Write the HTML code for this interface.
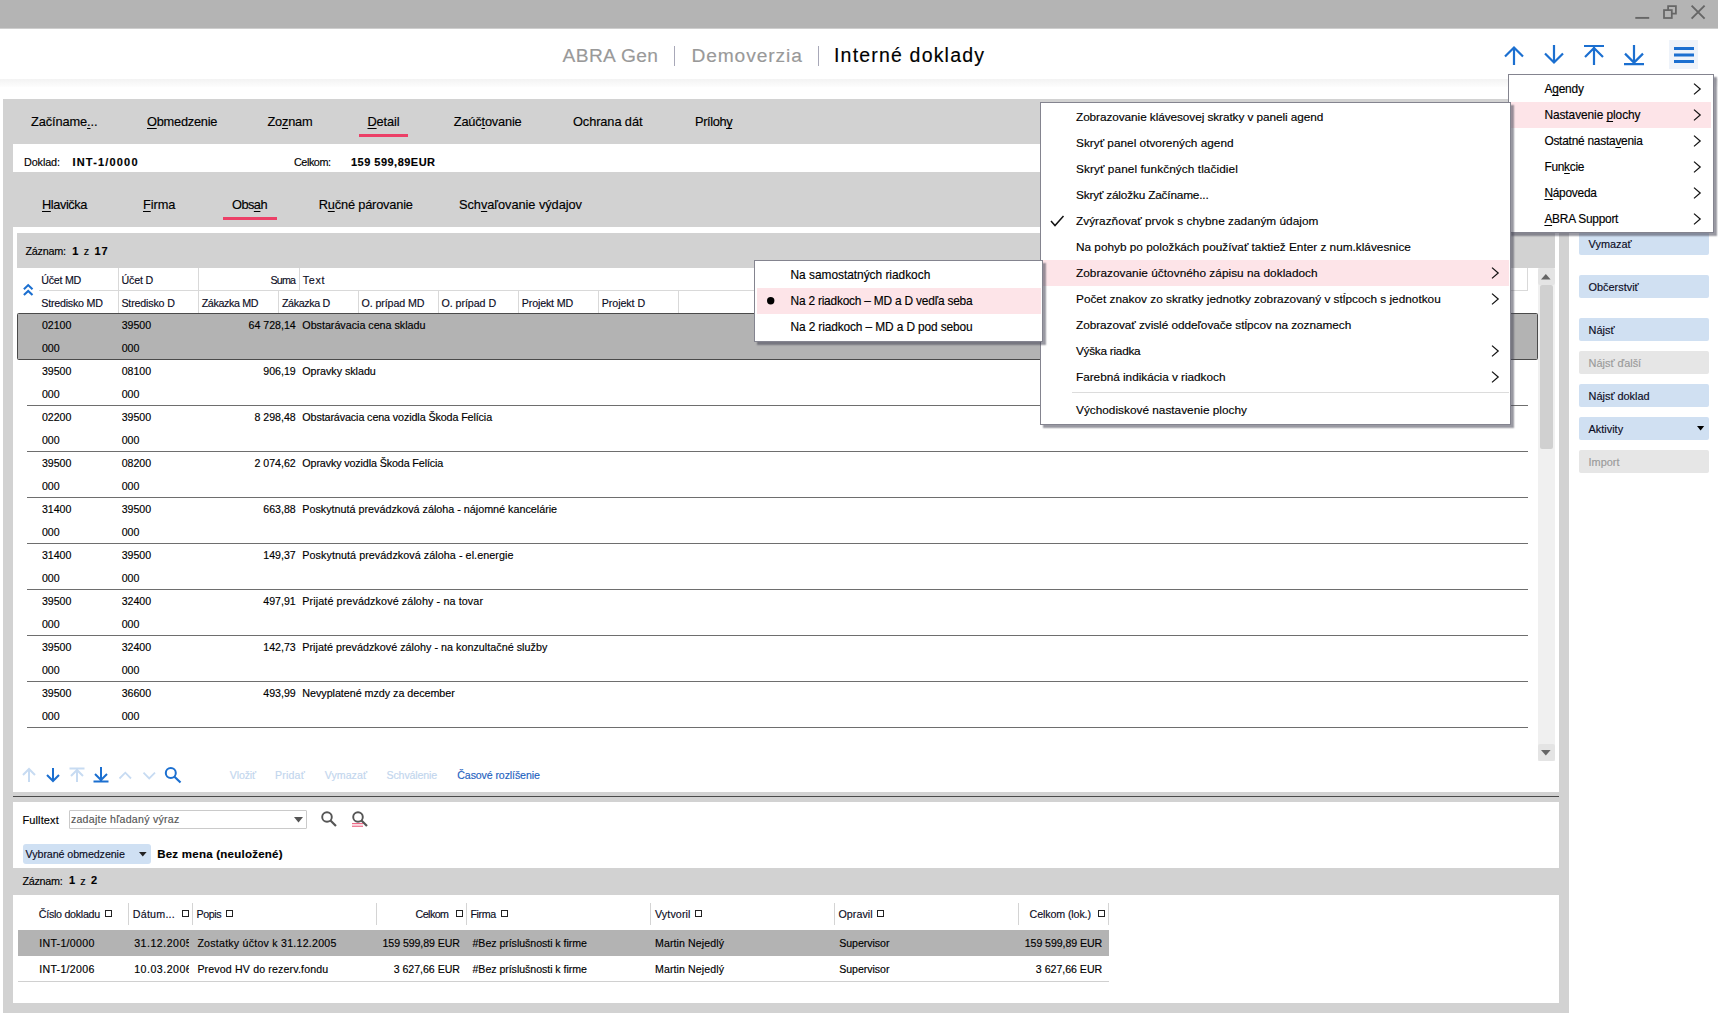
<!DOCTYPE html><html><head><meta charset="utf-8"><style>
html,body{margin:0;padding:0;}
body{width:1718px;height:1014px;overflow:hidden;position:relative;background:#fff;font-family:"Liberation Sans",sans-serif;}
.t{position:absolute;line-height:1;white-space:nowrap;-webkit-text-stroke:0.15px currentColor;}
.r{position:absolute;}
u{text-decoration:underline;text-underline-offset:1.5px;text-decoration-thickness:1px;text-decoration-skip-ink:none;}
</style></head><body>
<div class="r" style="left:0px;top:0px;width:1718px;height:28px;background:#b4b4b4;"></div>
<div class="r" style="left:0px;top:28px;width:1718px;height:1px;background:#cecece;"></div>
<svg class="r" style="left:1620px;top:0" width="98" height="28" viewBox="1620 0 98 28"><path d="M1635.3 17.9H1649.2" stroke="#666" stroke-width="1.9"/><rect x="1664" y="10.1" width="7.8" height="7.9" fill="none" stroke="#666" stroke-width="1.75"/><path d="M1668.1 10.1V6H1675.9V13.6H1671.8" fill="none" stroke="#666" stroke-width="1.75"/><path d="M1691.6 5.6L1704.6 18.6M1704.6 5.6L1691.6 18.6" stroke="#666" stroke-width="1.9"/></svg>
<div class="t" style="top:46.15px;font-size:19.2px;color:#999;letter-spacing:0.353px;left:562.60px;">ABRA Gen</div>
<div class="r" style="left:674px;top:46px;width:1px;height:20px;background:#a8a8b8;"></div>
<div class="t" style="top:46.15px;font-size:19.2px;color:#999;letter-spacing:0.897px;left:691.40px;">Demoverzia</div>
<div class="r" style="left:818px;top:46px;width:1px;height:20px;background:#a8a8b8;"></div>
<div class="t" style="top:45.89px;font-size:19.5px;color:#000;letter-spacing:1.187px;left:834.00px;">Interné doklady</div>
<div class="r" style="left:0px;top:79px;width:1718px;height:8px;background:linear-gradient(#f3f3f3,#fdfdfd);"></div>
<svg class="r" style="left:1490px;top:30px;" width="180" height="45" viewBox="0 0 180 45"><path d="M24 17.5V35 M15 26.5 L24 17.5 L33 26.5" fill="none" stroke="#1b6fd0" stroke-width="2.2"/><path d="M64 15V32.5 M55 23.5 L64 32.5 L73 23.5" fill="none" stroke="#1b6fd0" stroke-width="2.2"/><path d="M94 16H114 M104 17V35 M95 27 L104 18 L113 27" fill="none" stroke="#1b6fd0" stroke-width="2.2"/><path d="M134 34.2H154 M144 15V33 M135 23.6 L144 32.6 L153 23.6" fill="none" stroke="#1b6fd0" stroke-width="2.2"/></svg>
<div class="r" style="left:1669px;top:40px;width:29px;height:29px;background:#eef3fa;"></div>
<svg class="r" style="left:1674px;top:47px;" width="20" height="16" viewBox="0 0 20 16"><path d="M0 1.5H20 M0 8H20 M0 14.5H20" stroke="#1b6fd0" stroke-width="2.8"/></svg>
<div class="r" style="left:3px;top:99px;width:1566px;height:914px;background:#d2d2d2;"></div>
<div class="t" style="top:116.16px;font-size:12.8px;color:#000;letter-spacing:-0.108px;left:31.00px;">Začíname<u>.</u>..</div>
<div class="t" style="top:116.16px;font-size:12.8px;color:#000;letter-spacing:-0.231px;left:147.00px;"><u>O</u>bmedzenie</div>
<div class="t" style="top:116.16px;font-size:12.8px;color:#000;letter-spacing:-0.242px;left:267.50px;">Zo<u>z</u>nam</div>
<div class="t" style="top:116.16px;font-size:12.8px;color:#000;letter-spacing:-0.141px;left:367.50px;"><u>D</u>etail</div>
<div class="t" style="top:116.16px;font-size:12.8px;color:#000;letter-spacing:-0.176px;left:453.75px;">Zaúč<u>t</u>ovanie</div>
<div class="t" style="top:116.16px;font-size:12.8px;color:#000;letter-spacing:-0.096px;left:573.00px;">Ochrana dát</div>
<div class="t" style="top:116.16px;font-size:12.8px;color:#000;letter-spacing:-0.385px;left:695.00px;">Príloh<u>y</u></div>
<div class="r" style="left:359px;top:134px;width:49px;height:3px;background:#ec4067;"></div>
<div class="r" style="left:13px;top:144px;width:1546px;height:28px;background:#fff;"></div>
<div class="t" style="top:157.06px;font-size:10.8px;color:#000;letter-spacing:-0.102px;left:24.00px;">Doklad:</div>
<div class="t" style="top:156.89px;font-size:11px;color:#000;font-weight:bold;letter-spacing:1.178px;left:72.50px;">INT-1/0000</div>
<div class="t" style="top:157.06px;font-size:10.8px;color:#000;letter-spacing:-0.439px;left:294.00px;">Celkom:</div>
<div class="t" style="top:156.89px;font-size:11px;color:#000;font-weight:bold;letter-spacing:0.478px;left:351.00px;">159 599,89EUR</div>
<div class="t" style="top:199.06px;font-size:12.8px;color:#000;letter-spacing:-0.421px;left:42.00px;"><u>H</u>lavička</div>
<div class="t" style="top:199.06px;font-size:12.8px;color:#000;letter-spacing:-0.067px;left:143.00px;"><u>F</u>irma</div>
<div class="t" style="top:199.06px;font-size:12.8px;color:#000;letter-spacing:-0.549px;left:232.00px;">Obs<u>a</u>h</div>
<div class="t" style="top:199.06px;font-size:12.8px;color:#000;letter-spacing:-0.18px;left:318.75px;">R<u>u</u>čné párovanie</div>
<div class="t" style="top:199.06px;font-size:12.8px;color:#000;letter-spacing:-0.051px;left:459.00px;">Sch<u>v</u>aľovanie výdajov</div>
<div class="r" style="left:223px;top:217px;width:54px;height:3px;background:#ec4067;"></div>
<div class="r" style="left:13px;top:227px;width:1546px;height:565px;background:#fff;"></div>
<div class="r" style="left:17px;top:233px;width:1538px;height:35px;background:#d2d2d2;"></div>
<div class="t" style="top:246.36px;font-size:10.8px;color:#000;letter-spacing:-0.252px;left:25.50px;">Záznam:</div>
<div class="t" style="top:246.19px;font-size:11px;color:#000;font-weight:bold;left:72.30px;">1</div>
<div class="t" style="top:246.36px;font-size:10.8px;color:#000;left:83.80px;">z</div>
<div class="t" style="top:246.19px;font-size:11px;color:#000;font-weight:bold;letter-spacing:0.89px;left:94.60px;">17</div>
<div class="r" style="left:39px;top:290px;width:1489px;height:1px;background:#d9d9d9;"></div>
<div class="r" style="left:118px;top:268px;width:1px;height:22px;background:#d9d9d9;"></div>
<div class="r" style="left:198px;top:268px;width:1px;height:22px;background:#d9d9d9;"></div>
<div class="r" style="left:299px;top:268px;width:1px;height:22px;background:#d9d9d9;"></div>
<div class="r" style="left:1527px;top:268px;width:1px;height:22px;background:#d9d9d9;"></div>
<div class="r" style="left:118px;top:291px;width:1px;height:22px;background:#d9d9d9;"></div>
<div class="r" style="left:198px;top:291px;width:1px;height:22px;background:#d9d9d9;"></div>
<div class="r" style="left:278px;top:291px;width:1px;height:22px;background:#d9d9d9;"></div>
<div class="r" style="left:358px;top:291px;width:1px;height:22px;background:#d9d9d9;"></div>
<div class="r" style="left:438px;top:291px;width:1px;height:22px;background:#d9d9d9;"></div>
<div class="r" style="left:518px;top:291px;width:1px;height:22px;background:#d9d9d9;"></div>
<div class="r" style="left:598px;top:291px;width:1px;height:22px;background:#d9d9d9;"></div>
<div class="r" style="left:678px;top:291px;width:1px;height:22px;background:#d9d9d9;"></div>
<svg class="r" style="left:20px;top:280px" width="16" height="18" viewBox="20 280 16 18"><path d="M23.9 289.2L28.2 285.1L32.5 289.2M23.9 295L28.2 290.9L32.5 295" fill="none" stroke="#1b6fd0" stroke-width="2.1"/></svg>
<div class="t" style="top:275.24px;font-size:10.7px;color:#0c0c24;letter-spacing:-0.254px;left:41.30px;">Účet MD</div>
<div class="t" style="top:275.24px;font-size:10.7px;color:#0c0c24;letter-spacing:-0.158px;left:121.40px;">Účet D</div>
<div class="t" style="top:275.24px;font-size:10.7px;color:#0c0c24;letter-spacing:-0.793px;right:1422.82px;">Suma</div>
<div class="t" style="top:275.24px;font-size:10.7px;color:#0c0c24;letter-spacing:0.655px;left:302.80px;">Text</div>
<div class="t" style="top:298.04px;font-size:10.7px;color:#0c0c24;letter-spacing:-0.227px;left:41.30px;">Stredisko MD</div>
<div class="t" style="top:298.04px;font-size:10.7px;color:#0c0c24;letter-spacing:-0.172px;left:121.40px;">Stredisko D</div>
<div class="t" style="top:298.04px;font-size:10.7px;color:#0c0c24;letter-spacing:-0.359px;left:201.70px;">Zákazka MD</div>
<div class="t" style="top:298.04px;font-size:10.7px;color:#0c0c24;letter-spacing:-0.343px;left:281.90px;">Zákazka D</div>
<div class="t" style="top:298.04px;font-size:10.7px;color:#0c0c24;letter-spacing:-0.1px;left:361.50px;">O. prípad MD</div>
<div class="t" style="top:298.04px;font-size:10.7px;color:#0c0c24;letter-spacing:-0.062px;left:441.50px;">O. prípad D</div>
<div class="t" style="top:298.04px;font-size:10.7px;color:#0c0c24;letter-spacing:-0.168px;left:521.80px;">Projekt MD</div>
<div class="t" style="top:298.04px;font-size:10.7px;color:#0c0c24;letter-spacing:-0.06px;left:601.70px;">Projekt D</div>
<div class="r" style="left:17px;top:313px;width:1521px;height:47px;background:#b3b3b3;box-sizing:border-box;border:1px solid #4a4a4a;border-radius:1.5px;"></div>
<div class="t" style="top:320.43px;font-size:10.6px;color:#000;letter-spacing:0px;left:41.90px;">02100</div>
<div class="t" style="top:320.43px;font-size:10.6px;color:#000;letter-spacing:0px;left:121.70px;">39500</div>
<div class="t" style="top:320.43px;font-size:10.6px;color:#000;letter-spacing:0px;right:1422.31px;">64 728,14</div>
<div class="t" style="top:320.30px;font-size:10.75px;color:#000;letter-spacing:-0.025px;left:302.30px;">Obstarávacia cena skladu</div>
<div class="t" style="top:343.33px;font-size:10.6px;color:#000;letter-spacing:0px;left:41.90px;">000</div>
<div class="t" style="top:343.33px;font-size:10.6px;color:#000;letter-spacing:0px;left:121.70px;">000</div>
<div class="t" style="top:366.43px;font-size:10.6px;color:#000;letter-spacing:0px;left:41.90px;">39500</div>
<div class="t" style="top:366.43px;font-size:10.6px;color:#000;letter-spacing:0px;left:121.70px;">08100</div>
<div class="t" style="top:366.43px;font-size:10.6px;color:#000;letter-spacing:0px;right:1422.31px;">906,19</div>
<div class="t" style="top:366.30px;font-size:10.75px;color:#000;letter-spacing:-0.044px;left:302.30px;">Opravky skladu</div>
<div class="t" style="top:389.33px;font-size:10.6px;color:#000;letter-spacing:0px;left:41.90px;">000</div>
<div class="t" style="top:389.33px;font-size:10.6px;color:#000;letter-spacing:0px;left:121.70px;">000</div>
<div class="r" style="left:27px;top:405px;width:1501px;height:1px;background:#6e6e6e;"></div>
<div class="t" style="top:412.43px;font-size:10.6px;color:#000;letter-spacing:0px;left:41.90px;">02200</div>
<div class="t" style="top:412.43px;font-size:10.6px;color:#000;letter-spacing:0px;left:121.70px;">39500</div>
<div class="t" style="top:412.43px;font-size:10.6px;color:#000;letter-spacing:0px;right:1422.32px;">8 298,48</div>
<div class="t" style="top:412.30px;font-size:10.75px;color:#000;letter-spacing:-0.115px;left:302.30px;">Obstarávacia cena vozidla Škoda Felícia</div>
<div class="t" style="top:435.33px;font-size:10.6px;color:#000;letter-spacing:0px;left:41.90px;">000</div>
<div class="t" style="top:435.33px;font-size:10.6px;color:#000;letter-spacing:0px;left:121.70px;">000</div>
<div class="r" style="left:27px;top:451px;width:1501px;height:1px;background:#6e6e6e;"></div>
<div class="t" style="top:458.43px;font-size:10.6px;color:#000;letter-spacing:0px;left:41.90px;">39500</div>
<div class="t" style="top:458.43px;font-size:10.6px;color:#000;letter-spacing:0px;left:121.70px;">08200</div>
<div class="t" style="top:458.43px;font-size:10.6px;color:#000;letter-spacing:0px;right:1422.32px;">2 074,62</div>
<div class="t" style="top:458.30px;font-size:10.75px;color:#000;letter-spacing:-0.13px;left:302.30px;">Opravky vozidla Škoda Felícia</div>
<div class="t" style="top:481.33px;font-size:10.6px;color:#000;letter-spacing:0px;left:41.90px;">000</div>
<div class="t" style="top:481.33px;font-size:10.6px;color:#000;letter-spacing:0px;left:121.70px;">000</div>
<div class="r" style="left:27px;top:497px;width:1501px;height:1px;background:#6e6e6e;"></div>
<div class="t" style="top:504.43px;font-size:10.6px;color:#000;letter-spacing:0px;left:41.90px;">31400</div>
<div class="t" style="top:504.43px;font-size:10.6px;color:#000;letter-spacing:0px;left:121.70px;">39500</div>
<div class="t" style="top:504.43px;font-size:10.6px;color:#000;letter-spacing:0px;right:1422.31px;">663,88</div>
<div class="t" style="top:504.30px;font-size:10.75px;color:#000;letter-spacing:0.005px;left:302.30px;">Poskytnutá prevádzková záloha - nájomné kancelárie</div>
<div class="t" style="top:527.33px;font-size:10.6px;color:#000;letter-spacing:0px;left:41.90px;">000</div>
<div class="t" style="top:527.33px;font-size:10.6px;color:#000;letter-spacing:0px;left:121.70px;">000</div>
<div class="r" style="left:27px;top:543px;width:1501px;height:1px;background:#6e6e6e;"></div>
<div class="t" style="top:550.43px;font-size:10.6px;color:#000;letter-spacing:0px;left:41.90px;">31400</div>
<div class="t" style="top:550.43px;font-size:10.6px;color:#000;letter-spacing:0px;left:121.70px;">39500</div>
<div class="t" style="top:550.43px;font-size:10.6px;color:#000;letter-spacing:0px;right:1422.31px;">149,37</div>
<div class="t" style="top:550.30px;font-size:10.75px;color:#000;letter-spacing:0.062px;left:302.30px;">Poskytnutá prevádzková záloha - el.energie</div>
<div class="t" style="top:573.33px;font-size:10.6px;color:#000;letter-spacing:0px;left:41.90px;">000</div>
<div class="t" style="top:573.33px;font-size:10.6px;color:#000;letter-spacing:0px;left:121.70px;">000</div>
<div class="r" style="left:27px;top:589px;width:1501px;height:1px;background:#6e6e6e;"></div>
<div class="t" style="top:596.43px;font-size:10.6px;color:#000;letter-spacing:0px;left:41.90px;">39500</div>
<div class="t" style="top:596.43px;font-size:10.6px;color:#000;letter-spacing:0px;left:121.70px;">32400</div>
<div class="t" style="top:596.43px;font-size:10.6px;color:#000;letter-spacing:0px;right:1422.31px;">497,91</div>
<div class="t" style="top:596.30px;font-size:10.75px;color:#000;letter-spacing:0.106px;left:302.30px;">Prijaté prevádzkové zálohy - na tovar</div>
<div class="t" style="top:619.33px;font-size:10.6px;color:#000;letter-spacing:0px;left:41.90px;">000</div>
<div class="t" style="top:619.33px;font-size:10.6px;color:#000;letter-spacing:0px;left:121.70px;">000</div>
<div class="r" style="left:27px;top:635px;width:1501px;height:1px;background:#6e6e6e;"></div>
<div class="t" style="top:642.43px;font-size:10.6px;color:#000;letter-spacing:0px;left:41.90px;">39500</div>
<div class="t" style="top:642.43px;font-size:10.6px;color:#000;letter-spacing:0px;left:121.70px;">32400</div>
<div class="t" style="top:642.43px;font-size:10.6px;color:#000;letter-spacing:0px;right:1422.31px;">142,73</div>
<div class="t" style="top:642.30px;font-size:10.75px;color:#000;letter-spacing:0.024px;left:302.30px;">Prijaté prevádzkové zálohy - na konzultačné služby</div>
<div class="t" style="top:665.33px;font-size:10.6px;color:#000;letter-spacing:0px;left:41.90px;">000</div>
<div class="t" style="top:665.33px;font-size:10.6px;color:#000;letter-spacing:0px;left:121.70px;">000</div>
<div class="r" style="left:27px;top:681px;width:1501px;height:1px;background:#6e6e6e;"></div>
<div class="t" style="top:688.43px;font-size:10.6px;color:#000;letter-spacing:0px;left:41.90px;">39500</div>
<div class="t" style="top:688.43px;font-size:10.6px;color:#000;letter-spacing:0px;left:121.70px;">36600</div>
<div class="t" style="top:688.43px;font-size:10.6px;color:#000;letter-spacing:0px;right:1422.31px;">493,99</div>
<div class="t" style="top:688.30px;font-size:10.75px;color:#000;letter-spacing:-0.039px;left:302.30px;">Nevyplatené mzdy za december</div>
<div class="t" style="top:711.33px;font-size:10.6px;color:#000;letter-spacing:0px;left:41.90px;">000</div>
<div class="t" style="top:711.33px;font-size:10.6px;color:#000;letter-spacing:0px;left:121.70px;">000</div>
<div class="r" style="left:27px;top:727px;width:1501px;height:1px;background:#6e6e6e;"></div>
<div class="r" style="left:1538px;top:268px;width:17px;height:493px;background:#f0f0f0;"></div>
<div class="r" style="left:1538px;top:268px;width:17px;height:17px;background:#e4e4e4;border-radius:2px;"></div>
<svg class="r" style="left:1541px;top:273.5px;" width="10" height="6" viewBox="0 0 10 6"><path d="M0 5.5L4.8 0L9.6 5.5Z" fill="#666"/></svg>
<div class="r" style="left:1540px;top:285px;width:13px;height:164px;background:#d0d0d0;border-radius:2px;"></div>
<div class="r" style="left:1538px;top:744px;width:17px;height:17px;background:#e4e4e4;border-radius:2px;"></div>
<svg class="r" style="left:1541px;top:750px;" width="10" height="6" viewBox="0 0 10 6"><path d="M0 0L4.8 5.5L9.6 0Z" fill="#666"/></svg>
<svg class="r" style="left:0;top:0" width="200" height="800"><path d="M29 769V782 M23 775 L29 769 L35 775" fill="none" stroke="#c7dbf2" stroke-width="2"/><path d="M53 768V781 M47 775 L53 781 L59 775" fill="none" stroke="#1b6fd0" stroke-width="2"/><path d="M69.5 768.5H84.5 M77 769.5V782 M71 776 L77 770 L83 776" fill="none" stroke="#c7dbf2" stroke-width="2"/><path d="M93.5 781.5H108.5 M101 767V780 M95 774 L101 780 L107 774" fill="none" stroke="#1b6fd0" stroke-width="2"/><path d="M119.5 778.5 L125.3 772.7 L131 778.5" fill="none" stroke="#c7dbf2" stroke-width="1.8"/><path d="M143.5 772.7 L149.2 778.5 L155 772.7" fill="none" stroke="#c7dbf2" stroke-width="1.8"/><circle cx="170.8" cy="773" r="5" fill="none" stroke="#1b6fd0" stroke-width="2"/><path d="M174.5 776.7 L180.5 782.5" stroke="#1b6fd0" stroke-width="2.2"/></svg>
<div class="t" style="top:769.63px;font-size:10.6px;color:#c2d6ee;letter-spacing:-0.137px;left:229.80px;">Vložiť</div>
<div class="t" style="top:769.63px;font-size:10.6px;color:#c2d6ee;letter-spacing:0.194px;left:275.00px;">Pridať</div>
<div class="t" style="top:769.63px;font-size:10.6px;color:#c2d6ee;letter-spacing:0.054px;left:324.70px;">Vymazať</div>
<div class="t" style="top:769.63px;font-size:10.6px;color:#c2d6ee;letter-spacing:-0.126px;left:386.50px;">Schválenie</div>
<div class="t" style="top:769.63px;font-size:10.6px;color:#1e62c0;letter-spacing:-0.104px;left:457.30px;">Časové rozlíšenie</div>
<div class="r" style="left:13px;top:796px;width:1546px;height:1px;background:#4a4a4a;"></div>
<div class="r" style="left:13px;top:802px;width:1546px;height:66px;background:#fff;"></div>
<div class="t" style="top:814.89px;font-size:11px;color:#000;letter-spacing:0.104px;left:22.50px;">Fulltext</div>
<div class="r" style="left:69px;top:810px;width:238px;height:19px;background:#fff;box-sizing:border-box;border:1px solid #cacaca;border-radius:1px;"></div>
<div class="t" style="top:814.13px;font-size:10.6px;color:#555;letter-spacing:0.258px;left:70.90px;">zadajte hľadaný výraz</div>
<svg class="r" style="left:294.3px;top:817.3px;" width="9" height="6" viewBox="0 0 9 6"><path d="M0 0H9L4.5 5.5Z" fill="#555"/></svg>
<svg class="r" style="left:321px;top:811px;" width="16" height="16" viewBox="0 0 16 16"><circle cx="6" cy="6" r="4.8" fill="none" stroke="#555" stroke-width="1.9"/><path d="M9.5 9.5L15 15" stroke="#555" stroke-width="2.2"/></svg>
<svg class="r" style="left:352px;top:811px;" width="16" height="16" viewBox="0 0 16 16"><circle cx="6" cy="6" r="4.8" fill="none" stroke="#555" stroke-width="1.9"/><path d="M9.5 9.5L15 15" stroke="#555" stroke-width="2.2"/><path d="M0 12.7H11 M0 15.2H11" stroke="#e8486c" stroke-width="1"/></svg>
<div class="r" style="left:23px;top:844px;width:128px;height:20px;background:#cfe0f3;border-radius:3px;"></div>
<div class="t" style="top:848.64px;font-size:10.7px;color:#0c0c24;letter-spacing:-0.079px;left:25.60px;">Vybrané obmedzenie</div>
<svg class="r" style="left:138.6px;top:852px;" width="8" height="5" viewBox="0 0 8 5"><path d="M0 0H7.6L3.8 4.6Z" fill="#222"/></svg>
<div class="t" style="top:848.67px;font-size:11.5px;color:#000;font-weight:bold;letter-spacing:0.239px;left:157.20px;">Bez mena (neuložené)</div>
<div class="t" style="top:875.66px;font-size:10.8px;color:#000;letter-spacing:-0.285px;left:22.40px;">Záznam:</div>
<div class="t" style="top:875.49px;font-size:11px;color:#000;font-weight:bold;left:68.90px;">1</div>
<div class="t" style="top:875.66px;font-size:10.8px;color:#000;left:80.30px;">z</div>
<div class="t" style="top:875.49px;font-size:11px;color:#000;font-weight:bold;left:91.00px;">2</div>
<div class="r" style="left:13px;top:895px;width:1546px;height:108px;background:#fff;"></div>
<div class="r" style="left:128px;top:903px;width:1px;height:22px;background:#d4d4d4;"></div>
<div class="r" style="left:192px;top:903px;width:1px;height:22px;background:#d4d4d4;"></div>
<div class="r" style="left:376px;top:903px;width:1px;height:22px;background:#d4d4d4;"></div>
<div class="r" style="left:466px;top:903px;width:1px;height:22px;background:#d4d4d4;"></div>
<div class="r" style="left:650px;top:903px;width:1px;height:22px;background:#d4d4d4;"></div>
<div class="r" style="left:834px;top:903px;width:1px;height:22px;background:#d4d4d4;"></div>
<div class="r" style="left:1018px;top:903px;width:1px;height:22px;background:#d4d4d4;"></div>
<div class="r" style="left:1108px;top:903px;width:1px;height:22px;background:#d4d4d4;"></div>
<div class="t" style="top:908.94px;font-size:10.7px;color:#0c0c24;letter-spacing:-0.278px;left:38.80px;">Číslo dokladu</div>
<div class="r" style="left:105.4px;top:909.8px;width:7.0px;height:7.0px;background:transparent;box-sizing:border-box;border:1px solid #222;"></div>
<div class="t" style="top:908.94px;font-size:10.7px;color:#0c0c24;letter-spacing:0.222px;left:132.80px;">Dátum...</div>
<div class="r" style="left:182.2px;top:909.8px;width:7.0px;height:7.0px;background:transparent;box-sizing:border-box;border:1px solid #222;"></div>
<div class="t" style="top:908.94px;font-size:10.7px;color:#0c0c24;letter-spacing:-0.413px;left:196.50px;">Popis</div>
<div class="r" style="left:226px;top:909.8px;width:7px;height:7.0px;background:transparent;box-sizing:border-box;border:1px solid #222;"></div>
<div class="t" style="top:908.94px;font-size:10.7px;color:#0c0c24;letter-spacing:-0.555px;right:1269.56px;">Celkom</div>
<div class="r" style="left:456.4px;top:909.8px;width:7.0px;height:7.0px;background:transparent;box-sizing:border-box;border:1px solid #222;"></div>
<div class="t" style="top:908.94px;font-size:10.7px;color:#0c0c24;letter-spacing:-0.398px;left:470.40px;">Firma</div>
<div class="r" style="left:501px;top:909.8px;width:7px;height:7.0px;background:transparent;box-sizing:border-box;border:1px solid #222;"></div>
<div class="t" style="top:908.94px;font-size:10.7px;color:#0c0c24;letter-spacing:0.119px;left:655.00px;">Vytvoril</div>
<div class="r" style="left:695.3px;top:909.8px;width:7.0px;height:7.0px;background:transparent;box-sizing:border-box;border:1px solid #222;"></div>
<div class="t" style="top:908.94px;font-size:10.7px;color:#0c0c24;letter-spacing:0.047px;left:838.50px;">Opravil</div>
<div class="r" style="left:877px;top:909.8px;width:7px;height:7.0px;background:transparent;box-sizing:border-box;border:1px solid #222;"></div>
<div class="t" style="top:908.94px;font-size:10.7px;color:#0c0c24;letter-spacing:-0.127px;right:627.13px;">Celkom (lok.)</div>
<div class="r" style="left:1098px;top:909.8px;width:7px;height:7.0px;background:transparent;box-sizing:border-box;border:1px solid #222;"></div>
<div class="r" style="left:18px;top:930px;width:1091px;height:26px;background:#b3b3b3;"></div>
<div class="r" style="left:18px;top:981px;width:1091px;height:1px;background:#d0d0d0;"></div>
<div class="t" style="top:938.03px;font-size:10.6px;color:#000;letter-spacing:0.298px;left:39.20px;">INT-1/0000</div>
<div class="t" style="top:938.03px;font-size:10.6px;color:#000;letter-spacing:0.5px;left:134.20px;width:54.5px;overflow:hidden;">31.12.2005</div>
<div class="t" style="top:938.03px;font-size:10.6px;color:#000;letter-spacing:0.248px;left:197.40px;">Zostatky účtov k 31.12.2005</div>
<div class="t" style="top:938.03px;font-size:10.6px;color:#000;letter-spacing:-0.068px;right:1258.08px;">159 599,89 EUR</div>
<div class="t" style="top:938.03px;font-size:10.6px;color:#000;letter-spacing:-0.041px;left:472.50px;">#Bez príslušnosti k firme</div>
<div class="t" style="top:938.03px;font-size:10.6px;color:#000;letter-spacing:0.097px;left:655.00px;">Martin Nejedlý</div>
<div class="t" style="top:938.03px;font-size:10.6px;color:#000;letter-spacing:-0.041px;left:839.20px;">Supervisor</div>
<div class="t" style="top:938.03px;font-size:10.6px;color:#000;letter-spacing:-0.068px;right:615.88px;">159 599,89 EUR</div>
<div class="t" style="top:963.93px;font-size:10.6px;color:#000;letter-spacing:0.298px;left:39.20px;">INT-1/2006</div>
<div class="t" style="top:963.93px;font-size:10.6px;color:#000;letter-spacing:0.5px;left:134.20px;width:54.5px;overflow:hidden;">10.03.2006</div>
<div class="t" style="top:963.93px;font-size:10.6px;color:#000;letter-spacing:0.159px;left:197.40px;">Prevod HV do rezerv.fondu</div>
<div class="t" style="top:963.93px;font-size:10.6px;color:#000;letter-spacing:-0.015px;right:1258.00px;">3 627,66 EUR</div>
<div class="t" style="top:963.93px;font-size:10.6px;color:#000;letter-spacing:-0.041px;left:472.50px;">#Bez príslušnosti k firme</div>
<div class="t" style="top:963.93px;font-size:10.6px;color:#000;letter-spacing:0.097px;left:655.00px;">Martin Nejedlý</div>
<div class="t" style="top:963.93px;font-size:10.6px;color:#000;letter-spacing:-0.041px;left:839.20px;">Supervisor</div>
<div class="t" style="top:963.93px;font-size:10.6px;color:#000;letter-spacing:-0.015px;right:615.80px;">3 627,66 EUR</div>
<div class="r" style="left:1579px;top:232px;width:130px;height:23px;background:#d0e0f2;border-radius:2px;"></div>
<div class="t" style="top:238.67px;font-size:10.9px;color:#0c0c24;left:1588.60px;">Vymazať</div>
<div class="r" style="left:1579px;top:275px;width:130px;height:23px;background:#d0e0f2;border-radius:2px;"></div>
<div class="t" style="top:281.67px;font-size:10.9px;color:#0c0c24;left:1588.60px;">Občerstviť</div>
<div class="r" style="left:1579px;top:318px;width:130px;height:23px;background:#d0e0f2;border-radius:2px;"></div>
<div class="t" style="top:324.67px;font-size:10.9px;color:#0c0c24;left:1588.60px;">Nájsť</div>
<div class="r" style="left:1579px;top:351px;width:130px;height:23px;background:#e6e6e6;border-radius:2px;"></div>
<div class="t" style="top:357.67px;font-size:10.9px;color:#9a9a9a;left:1588.60px;">Nájsť ďalší</div>
<div class="r" style="left:1579px;top:384px;width:130px;height:23px;background:#d0e0f2;border-radius:2px;"></div>
<div class="t" style="top:390.67px;font-size:10.9px;color:#0c0c24;left:1588.60px;">Nájsť doklad</div>
<div class="r" style="left:1579px;top:417px;width:130px;height:23px;background:#d0e0f2;border-radius:2px;"></div>
<div class="t" style="top:423.67px;font-size:10.9px;color:#0c0c24;left:1588.60px;">Aktivity</div>
<div class="r" style="left:1579px;top:450px;width:130px;height:23px;background:#e6e6e6;border-radius:2px;"></div>
<div class="t" style="top:456.67px;font-size:10.9px;color:#9a9a9a;left:1588.60px;">Import</div>
<svg class="r" style="left:1696.6px;top:425.7px;" width="8" height="5" viewBox="0 0 8 5"><path d="M0 0H7.2L3.6 4.6Z" fill="#000"/></svg>
<div class="r" style="left:1508px;top:74px;width:206px;height:159px;background:#fff;box-sizing:border-box;border:1px solid #84848f;box-shadow:3px 3px 1.5px rgba(70,70,85,0.55);"></div>
<div class="t" style="top:84.13px;font-size:11.9px;color:#000;letter-spacing:-0.148px;left:1544.40px;">A<u>g</u>endy</div>
<svg class="r" style="left:1693.2px;top:83px;" width="9" height="12" viewBox="0 0 9 12"><path d="M1 0.6L7.2 6L1 11.4" fill="none" stroke="#111" stroke-width="1.25"/></svg>
<div class="r" style="left:1511px;top:102px;width:200px;height:26px;background:#fde4e8;"></div>
<div class="t" style="top:110.13px;font-size:11.9px;color:#000;letter-spacing:-0.064px;left:1544.40px;">Nastavenie <u>p</u>lochy</div>
<svg class="r" style="left:1693.2px;top:109px;" width="9" height="12" viewBox="0 0 9 12"><path d="M1 0.6L7.2 6L1 11.4" fill="none" stroke="#111" stroke-width="1.25"/></svg>
<div class="t" style="top:136.13px;font-size:11.9px;color:#000;letter-spacing:-0.234px;left:1544.40px;">Ostatné nasta<u>v</u>enia</div>
<svg class="r" style="left:1693.2px;top:135px;" width="9" height="12" viewBox="0 0 9 12"><path d="M1 0.6L7.2 6L1 11.4" fill="none" stroke="#111" stroke-width="1.25"/></svg>
<div class="t" style="top:162.13px;font-size:11.9px;color:#000;letter-spacing:-0.258px;left:1544.40px;">Fun<u>k</u>cie</div>
<svg class="r" style="left:1693.2px;top:161px;" width="9" height="12" viewBox="0 0 9 12"><path d="M1 0.6L7.2 6L1 11.4" fill="none" stroke="#111" stroke-width="1.25"/></svg>
<div class="t" style="top:188.13px;font-size:11.9px;color:#000;letter-spacing:-0.246px;left:1544.40px;"><u>N</u>ápoveda</div>
<svg class="r" style="left:1693.2px;top:187px;" width="9" height="12" viewBox="0 0 9 12"><path d="M1 0.6L7.2 6L1 11.4" fill="none" stroke="#111" stroke-width="1.25"/></svg>
<div class="t" style="top:214.13px;font-size:11.9px;color:#000;letter-spacing:-0.241px;left:1544.40px;"><u>A</u>BRA Support</div>
<svg class="r" style="left:1693.2px;top:213px;" width="9" height="12" viewBox="0 0 9 12"><path d="M1 0.6L7.2 6L1 11.4" fill="none" stroke="#111" stroke-width="1.25"/></svg>
<div class="r" style="left:1040px;top:102px;width:471px;height:323px;background:#fff;box-sizing:border-box;border:1px solid #84848f;box-shadow:3px 3px 1.5px rgba(70,70,85,0.55);"></div>
<div class="t" style="top:111.71px;font-size:11.8px;color:#000;letter-spacing:-0.071px;left:1076.00px;">Zobrazovanie klávesovej skratky v paneli agend</div>
<div class="t" style="top:137.71px;font-size:11.8px;color:#000;letter-spacing:0.011px;left:1076.00px;">Skryť panel otvorených agend</div>
<div class="t" style="top:163.71px;font-size:11.8px;color:#000;letter-spacing:0.089px;left:1076.00px;">Skryť panel funkčných tlačidiel</div>
<div class="t" style="top:189.71px;font-size:11.8px;color:#000;letter-spacing:-0.174px;left:1076.00px;">Skryť záložku Začíname...</div>
<div class="t" style="top:215.71px;font-size:11.8px;color:#000;letter-spacing:0.03px;left:1076.00px;">Zvýrazňovať prvok s chybne zadaným údajom</div>
<div class="t" style="top:241.71px;font-size:11.8px;color:#000;letter-spacing:-0.0px;left:1076.00px;">Na pohyb po položkách používať taktiež Enter z num.klávesnice</div>
<div class="r" style="left:1043px;top:260px;width:466px;height:26px;background:#fde4e8;"></div>
<div class="t" style="top:267.71px;font-size:11.8px;color:#000;letter-spacing:0.038px;left:1076.00px;">Zobrazovanie účtovného zápisu na dokladoch</div>
<svg class="r" style="left:1490.5px;top:267px;" width="9" height="12" viewBox="0 0 9 12"><path d="M1 0.6L7.2 6L1 11.4" fill="none" stroke="#111" stroke-width="1.25"/></svg>
<div class="t" style="top:293.71px;font-size:11.8px;color:#000;letter-spacing:0.012px;left:1076.00px;">Počet znakov zo skratky jednotky zobrazovaný v stĺpcoch s jednotkou</div>
<svg class="r" style="left:1490.5px;top:293px;" width="9" height="12" viewBox="0 0 9 12"><path d="M1 0.6L7.2 6L1 11.4" fill="none" stroke="#111" stroke-width="1.25"/></svg>
<div class="t" style="top:319.71px;font-size:11.8px;color:#000;letter-spacing:-0.045px;left:1076.00px;">Zobrazovať zvislé oddeľovače stĺpcov na zoznamech</div>
<div class="t" style="top:345.71px;font-size:11.8px;color:#000;letter-spacing:-0.265px;left:1076.00px;">Výška riadka</div>
<svg class="r" style="left:1490.5px;top:345px;" width="9" height="12" viewBox="0 0 9 12"><path d="M1 0.6L7.2 6L1 11.4" fill="none" stroke="#111" stroke-width="1.25"/></svg>
<div class="t" style="top:371.71px;font-size:11.8px;color:#000;letter-spacing:-0.026px;left:1076.00px;">Farebná indikácia v riadkoch</div>
<svg class="r" style="left:1490.5px;top:371px;" width="9" height="12" viewBox="0 0 9 12"><path d="M1 0.6L7.2 6L1 11.4" fill="none" stroke="#111" stroke-width="1.25"/></svg>
<svg class="r" style="left:1049.5px;top:214.5px;" width="15" height="12" viewBox="0 0 15 12"><path d="M1 6L5 10.5L13.5 1" fill="none" stroke="#111" stroke-width="1.5"/></svg>
<div class="r" style="left:1072px;top:392px;width:437px;height:1px;background:#dcdcdc;"></div>
<div class="t" style="top:404.71px;font-size:11.8px;color:#000;letter-spacing:0.015px;left:1076.00px;">Východiskové nastavenie plochy</div>
<div class="r" style="left:754px;top:260px;width:289px;height:82px;background:#fff;box-sizing:border-box;border:1px solid #84848f;box-shadow:3px 3px 1.5px rgba(70,70,85,0.55);"></div>
<div class="t" style="top:269.93px;font-size:11.9px;color:#000;letter-spacing:-0.015px;left:790.50px;">Na samostatných riadkoch</div>
<div class="r" style="left:757px;top:288px;width:284px;height:26px;background:#fde4e8;"></div>
<div class="t" style="top:295.93px;font-size:11.9px;color:#000;letter-spacing:-0.201px;left:790.50px;">Na 2 riadkoch – MD a D vedľa seba</div>
<div class="t" style="top:321.93px;font-size:11.9px;color:#000;letter-spacing:-0.115px;left:790.50px;">Na 2 riadkoch – MD a D pod sebou</div>
<svg class="r" style="left:766.8px;top:297px;" width="8" height="8" viewBox="0 0 8 8"><circle cx="3.7" cy="3.7" r="3.7" fill="#000"/></svg>
</body></html>
